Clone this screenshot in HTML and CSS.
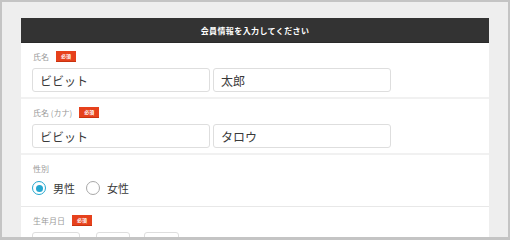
FILE: index.html
```html
<!DOCTYPE html>
<html lang="ja">
<head>
<meta charset="utf-8">
<link rel="stylesheet" href="styles.css">
</head>
<body>
<div class="frame">
  <div class="card">
    <div class="card-head">会員情報を入力してください</div>
    <div class="row row-thick">
      <div class="label">氏名<span class="badge">必須</span></div>
      <div class="fields">
        <div class="input wide">ビビット</div>
        <div class="input wide">太郎</div>
      </div>
    </div>
    <div class="row row-thick">
      <div class="label">氏名 (カナ)<span class="badge">必須</span></div>
      <div class="fields">
        <div class="input wide">ビビット</div>
        <div class="input wide">タロウ</div>
      </div>
    </div>
    <div class="row row-thin">
      <div class="label">性別</div>
      <div class="radios">
        <span class="radio checked"></span><span class="radio-text">男性</span>
        <span class="radio"></span><span class="radio-text">女性</span>
      </div>
    </div>
    <div class="row">
      <div class="label">生年月日<span class="badge">必須</span></div>
      <div class="fields dates">
        <div class="input year"></div>
        <div class="input month"></div>
        <div class="input day"></div>
      </div>
    </div>
  </div>
</div>
</body>
</html>
```

FILE: styles.css
```css
html, body {
  margin: 0;
  padding: 0;
}
body {
  font-family: "Noto Sans CJK JP", "Noto Sans", sans-serif;
}
.frame {
  width: 510px;
  height: 240px;
  box-sizing: border-box;
  border: 2px solid #c4c4c4;
  border-bottom-width: 3px;
  background: #eeeeee;
  overflow: hidden;
  padding: 16px 19px 0 19px;
}
.card {
  background: #ffffff;
}
.card-head {
  height: 24px;
  background: #333333;
  border-bottom: 1px solid #2a2a2a;
  color: #ffffff;
  font-size: 8px;
  font-weight: bold;
  letter-spacing: 0.4px;
  display: flex;
  align-items: center;
  justify-content: center;
}
.row {
  padding: 7px 11px 5px 11px;
}
.row-thick {
  border-bottom: 2px solid #f1f1f1;
}
.row-thin {
  border-bottom: 1px solid #e8e8e8;
}
.label {
  height: 12px;
  display: flex;
  align-items: center;
  font-size: 8px;
  color: #9a9a9a;
  margin-left: 1px;
}
.badge {
  display: inline-flex;
  align-items: center;
  justify-content: center;
  width: 20px;
  height: 11px;
  margin-left: 7px;
  background: #e6411c;
  border-bottom: 1px solid #c8330f;
  box-sizing: border-box;
  color: #ffffff;
  font-size: 5px;
  font-weight: bold;
}
.fields {
  display: flex;
  gap: 3px;
  margin-top: 6px;
}
.input {
  height: 24px;
  box-sizing: border-box;
  border: 1px solid #dedede;
  border-radius: 3px;
  display: flex;
  align-items: center;
  padding-left: 7px;
  font-size: 12px;
  color: #3a3a3a;
}
.wide {
  width: 178px;
}
.dates {
  gap: 0;
}
.year { width: 48px; margin-right: 16px; }
.month { width: 34px; margin-right: 14px; }
.day { width: 35px; }
.radios {
  display: flex;
  align-items: center;
  height: 14px;
  margin: 7px 0 6px 0;
}
.radio {
  width: 14px;
  height: 14px;
  box-sizing: border-box;
  border: 1px solid #a8a8a8;
  border-radius: 50%;
  display: inline-flex;
  align-items: center;
  justify-content: center;
}
.radio.checked {
  border: 1.5px solid #25a7cf;
}
.radio.checked::after {
  content: "";
  width: 7px;
  height: 7px;
  border-radius: 50%;
  background: #25a7cf;
}
.radio-text {
  font-size: 11px;
  color: #3a3a3a;
  margin-left: 7px;
  margin-right: 11px;
}
```
